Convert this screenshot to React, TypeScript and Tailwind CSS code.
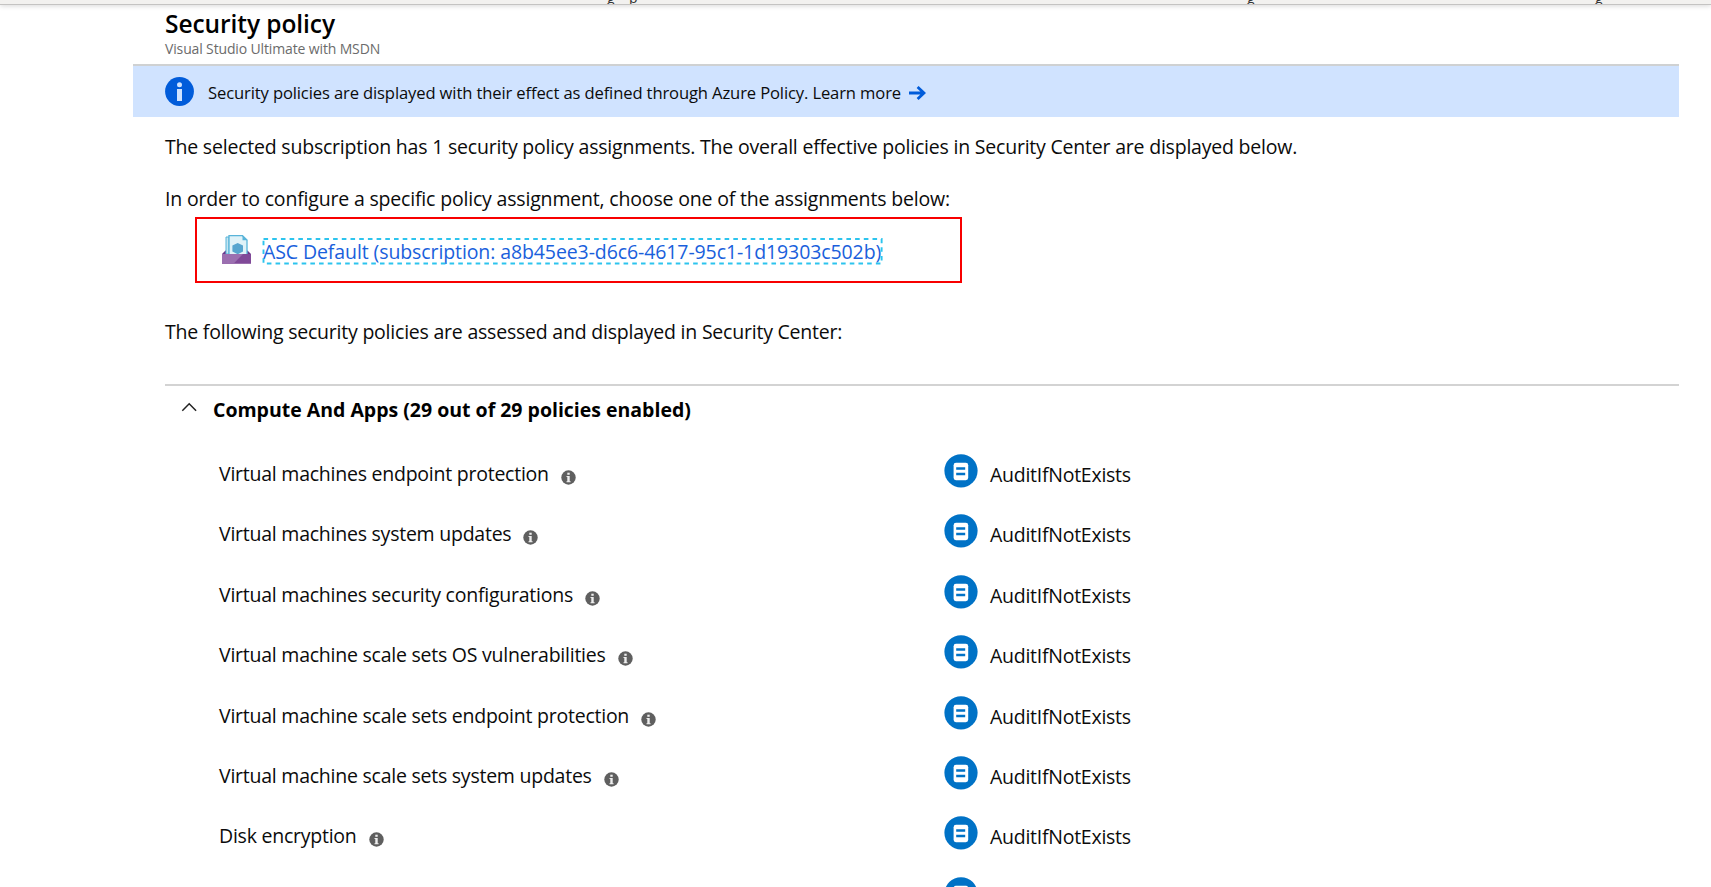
const policies = [
  "Virtual machines endpoint protection",
  "Virtual machines system updates",
  "Virtual machines security configurations",
  "Virtual machine scale sets OS vulnerabilities",
  "Virtual machine scale sets endpoint protection",
  "Virtual machine scale sets system updates",
  "Disk encryption",
  "",
];

function BannerInfoIcon() {
  return (
    <svg width="29" height="29" viewBox="0 0 29 29">
      <circle cx="14.5" cy="14.5" r="14.4" fill="#015cda" />
      <circle cx="14.5" cy="7.7" r="2.5" fill="#d0e3ff" />
      <rect x="12" y="12" width="5" height="12" fill="#d0e3ff" />
    </svg>
  );
}

function ArrowIcon() {
  return (
    <svg width="17" height="14" viewBox="0 0 17 14" fill="none" stroke="#015cda" strokeWidth="2.8">
      <path d="M0 7H15M8.6 1L15 7L8.6 13" />
    </svg>
  );
}

function AssignmentIcon() {
  return (
    <svg width="29" height="29" viewBox="0 0 29 29">
      <path d="M0 19L3.5 15.5H25.5L29 19Z" fill="#68378a" />
      <path d="M4 2H7V19H4Z" fill="#c5e6f2" stroke="#59b4d9" strokeWidth="1" />
      <path d="M7 .7H20.5L25 5V20H7Z" fill="#dff2f8" stroke="#59b4d9" strokeWidth="1.3" />
      <path d="M20.5 .5L25.4 5.2H20.5Z" fill="#59b4d9" />
      <path d="M15.7 8L21 10.6V16.4L15.7 19.2L10.4 16.4V10.6Z" fill="#57a5cf" />
      <path d="M0 19H29V28.8H0Z" fill="#804998" />
      <path d="M0 19H21L11.5 28.8H0Z" fill="#9b6fb0" />
    </svg>
  );
}

function InfoIcon() {
  return (
    <svg className="mt-[7px] shrink-0" width="15" height="15" viewBox="0 0 15 15">
      <circle cx="7.5" cy="7.5" r="7.2" fill="#5f5f5f" />
      <rect x="6.3" y="2.7" width="2.4" height="2.1" fill="#eee" />
      <path d="M5.5 5.9H8.7V11.2H9.6V12.2H5.5V11.2H6.3V6.9H5.5Z" fill="#eee" />
    </svg>
  );
}

function AuditIcon() {
  return (
    <svg className="shrink-0" width="34" height="34" viewBox="0 0 34 34">
      <circle cx="17" cy="16.8" r="16.6" fill="#0072c6" />
      <rect x="9.6" y="8.8" width="14.6" height="17.4" rx="2.4" fill="#fff" />
      <path d="M12.2 14.5H21.2M12.2 20H21.2" stroke="#0072c6" strokeWidth="2.7" />
    </svg>
  );
}

export default function App() {
  return (
    <div className="h-[887px] w-full overflow-hidden bg-white font-['Open_Sans','Noto_Sans',sans-serif] text-[19.5px] leading-7 text-[#0b0b0b]">
      <div className="h-[5px] border-b border-[#c4c3c2] bg-[#f2f1ef] shadow-[0_1px_5px_rgba(0,0,0,0.16)]">
        <div className="flex h-full items-end overflow-hidden pb-[2px] pl-[607px] text-[14px] leading-[9px] text-[#333]">
          <span className="w-[22px] shrink-0">g</span>
          <span className="w-[618px] shrink-0">p</span>
          <span className="w-[348px] shrink-0">g</span>
          <span>g</span>
        </div>
      </div>

      <header className="mt-[3px] pl-[165px]">
        <h1 className="text-[24.5px] leading-8 font-semibold tracking-[-0.07px] text-black">Security policy</h1>
        <p className="text-sm leading-[18px] tracking-[-0.14px] text-[#6b6b6b]">Visual Studio Ultimate with MSDN</p>
      </header>

      <div className="mt-[6px] mr-8 ml-[133px] flex h-[53px] items-start border-t-2 border-[#cfd1d2] bg-[#d0e3ff] pl-8">
        <div className="mt-[11px]">
          <BannerInfoIcon />
        </div>
        <p className="mt-[15px] ml-[14px] text-[16.6px] leading-6 tracking-[-0.13px] whitespace-nowrap">
          Security policies are displayed with their effect as defined through Azure Policy. Learn more
        </p>
        <div className="mt-[20px] ml-2">
          <ArrowIcon />
        </div>
      </div>

      <main className="mr-8 ml-[165px] flex flex-col whitespace-nowrap">
        <p className="mt-4 tracking-[-0.21px]">
          The selected subscription has 1 security policy assignments. The overall effective policies in Security Center are displayed below.
        </p>
        <p className="mt-6 tracking-[-0.18px]">
          In order to configure a specific policy assignment, choose one of the assignments below:
        </p>

        <div className="mt-1 ml-[30px] flex h-[66px] w-[767px] items-start border-2 border-[#f80000] pl-[25px]">
          <div className="mt-4">
            <AssignmentIcon />
          </div>
          <a className="relative mt-[19px] ml-3 h-[26px] leading-7 tracking-[-0.1px] text-[#1a5fdc]">
            ASC Default (subscription: a8b45ee3-d6c6-4617-95c1-1d19303c502b)
            <svg className="absolute inset-0 h-full w-full overflow-visible">
              <rect x="0.5" y="1" width="100%" height="24.5" fill="none" stroke="#2cc4ee" strokeWidth="1.9" strokeDasharray="4.6 4.1" />
            </svg>
          </a>
        </div>

        <p className="mt-[35px] tracking-[-0.22px]">
          The following security policies are assessed and displayed in Security Center:
        </p>

        <section className="mt-[38px] border-t-2 border-[#d3d3d3]">
          <div className="mt-[10px] flex items-start">
            <svg className="mt-[6px] ml-[16px]" width="17" height="10" viewBox="0 0 17 10" fill="none" stroke="#222" strokeWidth="1.5">
              <path d="M1.3 8.7L8.2 1.8L15.1 8.7" />
            </svg>
            <h2 className="ml-[15px] font-bold tracking-[-0.01px] text-black">Compute And Apps (29 out of 29 policies enabled)</h2>
          </div>

          <ul className="mt-[30px]">
            {policies.map((name, i) => (
              <li key={i} className="flex h-[60.4px] items-start">
                <div className="mt-[6px] flex h-7 w-[779px] items-center gap-3 pl-[54px] tracking-[-0.24px]">
                  {name}
                  {name && <InfoIcon />}
                </div>
                <AuditIcon />
                {name && <span className="mt-[7px] ml-3 tracking-[-0.26px]">AuditIfNotExists</span>}
              </li>
            ))}
          </ul>
        </section>
      </main>
    </div>
  );
}
